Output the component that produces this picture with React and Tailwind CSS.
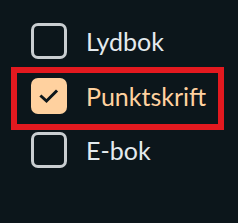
import React from "react";

function Box({ checked }) {
  if (checked) {
    return (
      <div className="w-[36px] h-[36px] shrink-0 rounded-[7px] bg-[#ffd19f] flex items-center justify-center">
        <svg width="20" height="16" viewBox="0 0 20 16" fill="none">
          <path d="M2.5 8.5 L7.5 13 L17 3.5" stroke="#0d171c" strokeWidth="3" strokeLinecap="square" strokeLinejoin="miter" />
        </svg>
      </div>
    );
  }
  return <div className="w-[36px] h-[36px] shrink-0 rounded-[7px] border-[3px] border-[#c9ced1]" />;
}

export default function App() {
  return (
    <div
      className="w-[238px] h-[223px] bg-[#0c161b] pt-[23px] pl-[31px] flex flex-col"
      style={{ fontFamily: 'Lato, "Noto Sans", sans-serif' }}
    >
      <div className="flex items-center gap-[19px] h-[36px]">
        <Box />
        <span className="text-[25px] leading-none text-[#e4eaee]">Lydbok</span>
      </div>
      <div className="mt-[14px] -ml-[14px] pl-[14px] pt-[5px] pb-[10px] w-[201px] outline-[6px] outline-solid outline-[#e3191f]">
        <div className="flex items-center gap-[19px] h-[36px]">
          <Box checked />
          <span className="text-[25px] leading-none text-[#ffd19f]">Punktskrift</span>
        </div>
      </div>
      <div className="mt-[8px] flex items-center gap-[19px] h-[36px]">
        <Box />
        <span className="text-[25px] leading-none text-[#e4eaee]">E-bok</span>
      </div>
    </div>
  );
}
